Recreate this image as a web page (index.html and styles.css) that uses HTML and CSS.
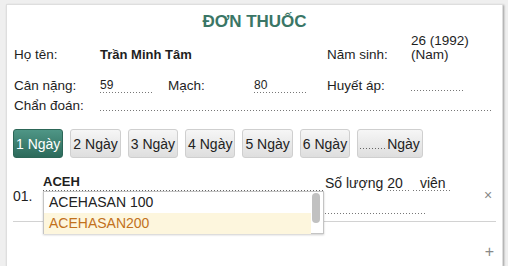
FILE: index.html
```html
<!DOCTYPE html>
<html lang="vi">
  <head>
    <meta charset="UTF-8" />
    <meta name="viewport" content="width=device-width, initial-scale=1.0" />
    <title>Đơn thuốc</title>
    <link rel="stylesheet" href="styles.css">
  </head>
  <body>
    <div class="sheet">
      <h1 class="title">ĐƠN THUỐC</h1>
      <div class="info">
        <span class="label">Họ tên:</span>
        <span class="name">Trần Minh Tâm</span>
        <span class="label">Năm sinh:</span>
        <span class="birth">26 (1992)<br />(Nam)</span>

        <span class="label">Cân nặng:</span>
        <span class="cell"><span class="fill w52">59</span></span>
        <span class="label">Mạch:</span>
        <span class="cell"><span class="fill w54">80</span></span>
        <span class="label">Huyết áp:</span>
        <span class="cell"><span class="fill w52"></span></span>

        <span class="label">Chẩn đoán:</span>
        <span class="fill diag"></span>
      </div>

      <div class="days">
        <button type="button" class="day active">1 Ngày</button>
        <button type="button" class="day">2 Ngày</button>
        <button type="button" class="day">3 Ngày</button>
        <button type="button" class="day">4 Ngày</button>
        <button type="button" class="day">5 Ngày</button>
        <button type="button" class="day">6 Ngày</button>
        <button type="button" class="day"><span class="day-input"></span>Ngày</button>
      </div>

      <div class="drug">
        <span class="no">01.</span>
        <div class="drug-main">
          <div class="drug-line">
            <span class="drug-name">ACEH</span>
            <span class="qty-label">Số lượng</span>
            <span class="fill qty">20</span>
            <span class="fill unit">viên</span>
          </div>
          <div class="drug-note"></div>
          <!-- goi y thuoc -->
          <ul class="suggest">
            <li>ACEHASAN 100</li>
            <li class="selected">ACEHASAN200</li>
          </ul>
          <span class="suggest-bar"></span>
        </div>
        <span class="remove">&#215;</span>
      </div>

      <div class="add">+</div>
    </div>
  </body>
</html>
```

FILE: styles.css
```css
* {
  padding: 0;
  margin: 0;
  box-sizing: border-box;
}
ul,
li {
  list-style: none;
}
body {
  background: #efefef;
  font-family: "Liberation Sans", Arial, sans-serif;
  color: #1e1e1e;
  overflow: hidden;
}
.sheet {
  margin: 4px 5px 0 6px;
  height: 262px;
  padding: 7px 6px 0 6px;
  background: #fff;
  border: 1px solid #dedede;
  border-bottom: 0;
  box-shadow: 1px 1px 2px rgba(0, 0, 0, 0.35);
}
.title {
  font-size: 17px;
  line-height: 20px;
  text-align: center;
  color: #3a7666;
  margin-bottom: 4px;
}
.info {
  display: grid;
  grid-template-columns: 86px 68px 86px 73px 84px 1fr;
  grid-template-rows: 36px 26px 14px;
  align-items: center;
  padding-left: 1px;
  padding-right: 4px;
  font-size: 13.5px;
}
.name {
  grid-column: span 3;
  font-size: 13px;
  font-weight: bold;
}
.birth {
  align-self: start;
  line-height: 14px;
  margin-top: -2px;
}
.fill {
  display: inline-block;
  font-size: 12px;
  line-height: 12px;
  height: 14px;
  background: linear-gradient(to right, #777 1px, transparent 1px) repeat-x left bottom / 3px 1px;
}
.w52 {
  width: 52px;
}
.w54 {
  width: 54px;
}
.diag {
  grid-column: span 5;
  height: 12px;
}
.days {
  display: flex;
  gap: 7px;
  margin-top: 17px;
}
.day {
  height: 29px;
  padding: 0 2px;
  font-family: inherit;
  font-size: 14px;
  color: #222;
  border: 1px solid #cfcfcf;
  border-radius: 3px;
  background: linear-gradient(#f6f6f6, #dedede);
}
.day.active {
  color: #fff;
  border-color: #2c6657;
  background: linear-gradient(#4f9686, #2c6a5b);
}
.day-input {
  display: inline-block;
  width: 26px;
  height: 12px;
  margin-right: 1px;
  background: linear-gradient(to right, #666 1px, transparent 1px) repeat-x left bottom / 3px 1px;
}
.drug {
  display: flex;
  margin-top: 18px;
  padding-bottom: 7px;
  border-bottom: 1px solid #d2d2d2;
}
.no {
  width: 30px;
  font-size: 14px;
  line-height: 16px;
  margin-top: 12px;
}
.drug-main {
  position: relative;
  flex: 1;
}
.drug-line {
  display: flex;
  align-items: flex-end;
  height: 15px;
}
.drug-name {
  width: 280px;
  height: 15px;
  font-size: 13px;
  font-weight: bold;
  line-height: 12px;
  background: linear-gradient(to right, #666 1px, transparent 1px) repeat-x left bottom / 3px 1px;
}
.qty-label {
  font-size: 14px;
  line-height: 16px;
  margin: -1px 4px 2px 2px;
  align-self: flex-start;
}
.qty {
  width: 22px;
  font-size: 14px;
  line-height: 14px;
  height: 15px;
}
.unit {
  width: 39px;
  margin-left: 4px;
  font-size: 14px;
  line-height: 14px;
  height: 15px;
  text-align: center;
}
.drug-note {
  width: 383px;
  height: 23px;
  background: linear-gradient(to right, #777 1px, transparent 1px) repeat-x left bottom / 3px 1px;
}
.suggest {
  position: absolute;
  top: 15px;
  left: 0;
  width: 281px;
  height: 43px;
  background: #fff;
  border: 1px solid #c4c4c4;
  box-shadow: 0 1px 2px rgba(0, 0, 0, 0.2);
  font-size: 14px;
}
.suggest li {
  height: 21px;
  line-height: 21px;
  padding-left: 5px;
  color: #222;
}
.suggest li.selected {
  color: #c2711c;
  background: #fdf6dd;
  margin-right: 12px;
}
.suggest-bar {
  position: absolute;
  top: 17px;
  left: 269px;
  width: 8px;
  height: 30px;
  border-radius: 4px;
  background: #c1c1c1;
}
.remove {
  width: 16px;
  margin-left: auto;
  padding-top: 11px;
  font-size: 14px;
  color: #888;
  text-align: center;
}
.add {
  margin-top: 22px;
  padding-right: 2px;
  text-align: right;
  font-size: 16px;
  line-height: 16px;
  color: #888;
}
```
